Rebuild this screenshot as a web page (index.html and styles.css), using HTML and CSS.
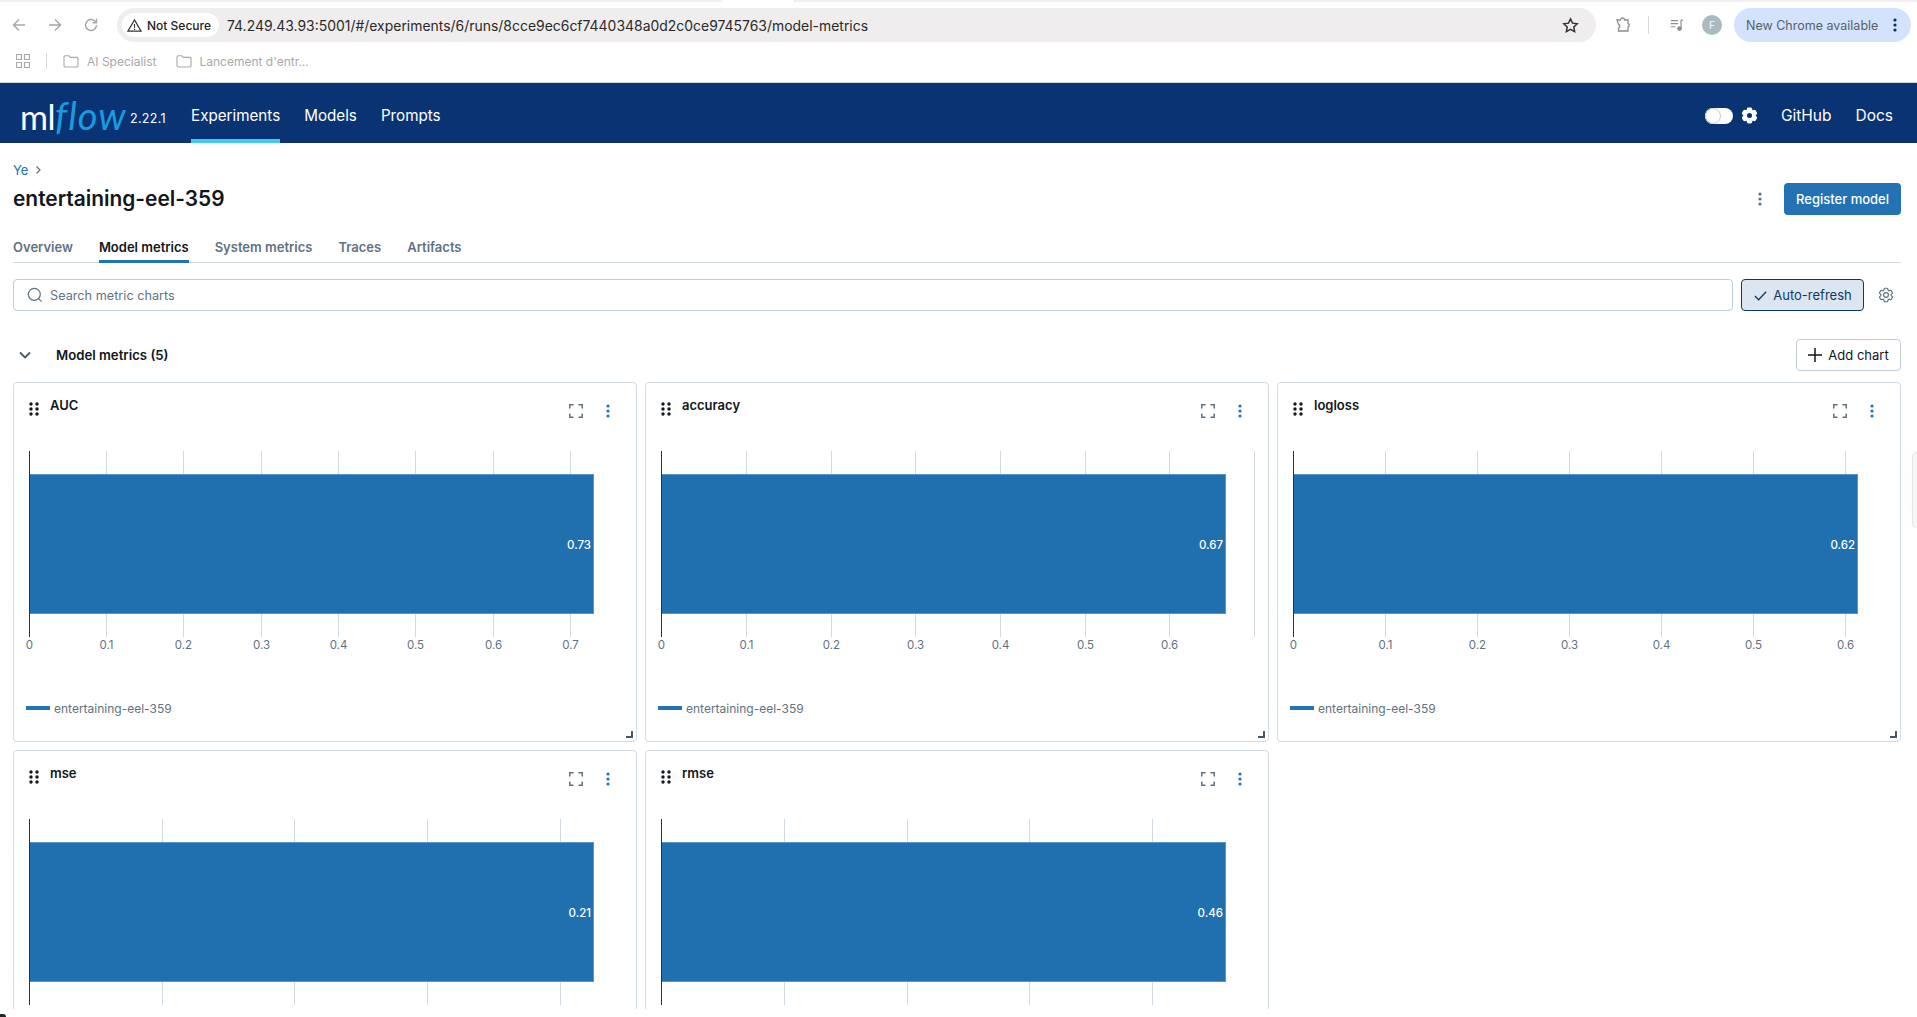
FILE: index.html
```html
<!DOCTYPE html>
<html lang="en">
<head>
  <meta charset="UTF-8" />
  <title>MLflow</title>
  <link rel="stylesheet" href="styles.css">
</head>
<body>

<svg class="sprite" width="0" height="0">
  <symbol id="cog" viewBox="0 0 24 24">
    <path d="M9.594 3.94c.09-.542.56-.94 1.11-.94h2.593c.55 0 1.02.398 1.11.94l.213 1.281c.063.374.313.686.645.87.074.04.147.083.22.127.325.196.72.257 1.075.124l1.217-.456a1.125 1.125 0 0 1 1.37.49l1.296 2.247a1.125 1.125 0 0 1-.26 1.431l-1.003.827c-.293.241-.438.613-.43.992a7.723 7.723 0 0 1 0 .255c-.008.378.137.75.43.991l1.004.827c.424.35.534.955.26 1.43l-1.298 2.247a1.125 1.125 0 0 1-1.369.491l-1.217-.456c-.355-.133-.75-.072-1.076.124a6.47 6.47 0 0 1-.22.128c-.331.183-.581.495-.644.869l-.213 1.281c-.09.543-.56.94-1.11.94h-2.594c-.55 0-1.019-.398-1.11-.94l-.213-1.281c-.062-.374-.312-.686-.644-.87a6.52 6.52 0 0 1-.22-.127c-.325-.196-.72-.257-1.076-.124l-1.217.456a1.125 1.125 0 0 1-1.369-.49l-1.297-2.247a1.125 1.125 0 0 1 .26-1.431l1.004-.827c.292-.24.437-.613.43-.991a6.932 6.932 0 0 1 0-.255c.007-.38-.138-.751-.43-.992l-1.004-.827a1.125 1.125 0 0 1-.26-1.43l1.297-2.247a1.125 1.125 0 0 1 1.37-.491l1.216.456c.356.133.751.072 1.076-.124.072-.044.146-.086.22-.128.332-.183.582-.495.644-.869l.214-1.28Z"/>
  </symbol>
  <symbol id="grip" viewBox="0 0 10 14">
    <circle cx="2" cy="2" r="1.7"/><circle cx="8" cy="2" r="1.7"/>
    <circle cx="2" cy="7" r="1.7"/><circle cx="8" cy="7" r="1.7"/>
    <circle cx="2" cy="12" r="1.7"/><circle cx="8" cy="12" r="1.7"/>
  </symbol>
  <symbol id="expand" viewBox="0 0 14 14">
    <path d="M.75 4.500V.75H4.500M9.500.75h3.750V4.500M13.250 9.500v3.750H9.500M4.500 13.250H.75V9.500" fill="none" stroke="currentColor" stroke-width="1.5"/>
  </symbol>
  <symbol id="kebab" viewBox="0 0 4 14">
    <circle cx="2" cy="2" r="1.6"/><circle cx="2" cy="7" r="1.6"/><circle cx="2" cy="12" r="1.6"/>
  </symbol>
  <symbol id="folder" viewBox="0 0 16 14">
    <path d="M1 3a1.200 1.200 0 0 1 1.200-1.200h3.600L7.400 3.400h6.400A1.200 1.200 0 0 1 15 4.600v7.200a1.200 1.200 0 0 1-1.200 1.200H2.200A1.200 1.200 0 0 1 1 11.800Z" fill="none" stroke="currentColor" stroke-width="1.1"/>
  </symbol>
</svg>

<div class="chrome">
  <div class="tab-strip"><span class="tab-notch"></span></div>
  <div class="toolbar">
    <div class="nav-buttons">
      <svg class="tool-icon" viewBox="0 0 16 16"><path d="M14 8H2.500M8 2.500 2.500 8 8 13.500"/></svg>
      <svg class="tool-icon" viewBox="0 0 16 16"><path d="M2 8h11.500M8 2.500 13.500 8 8 13.500"/></svg>
      <svg class="tool-icon" viewBox="0 0 16 16"><path d="M13.500 8A5.500 5.500 0 1 1 11.800 4L13.500 5.700M13.500 1.800v3.900H9.600"/></svg>
    </div>
    <div class="url-bar">
      <div class="security-chip">
        <svg class="warn-icon" viewBox="0 0 16 16"><path d="M8 2 15 14H1Z"/><path d="M8 6.500v4M8 11.500v1.200"/></svg>
        <span>Not Secure</span>
      </div>
      <div class="url-text">74.249.43.93:5001/#/experiments/6/runs/8cce9ec6cf7440348a0d2c0ce9745763/model-metrics</div>
      <svg class="star-icon" viewBox="0 0 16 16"><path d="m8 1.800 1.900 4 4.400.6-3.200 3 .8 4.400L8 11.700l-3.900 2.100.8-4.400-3.200-3 4.400-.6Z"/></svg>
    </div>
    <svg class="puzzle-icon" viewBox="0 0 18 18"><path d="M3 4h3.500a2 2 0 0 1 4 0H14v3.500a1.800 1.800 0 0 1 0 3.500v4H4.500v-3a1.800 1.800 0 0 0 0-3.500Z"/></svg>
    <span class="tool-sep"></span>
    <svg class="media-icon" viewBox="0 0 18 18"><path d="M2 4h8M2 7.500h8M2 11h5"/><path d="M13.500 3.500h2.500M13.500 3.500V13"/><circle cx="11.800" cy="13" r="2" class="media-note"/></svg>
    <div class="avatar">F</div>
    <div class="update-pill">
      <span>New Chrome available</span>
      <svg class="pill-kebab" viewBox="0 0 4 14"><use href="#kebab"/></svg>
    </div>
  </div>
  <div class="bookmarks">
    <svg class="apps-icon" viewBox="0 0 14 14"><path d="M.5.5h5v5h-5zM8.500.5h5v5h-5zM.5 8.500h5v5h-5zM8.500 8.500h5v5h-5z"/></svg>
    <span class="bookmark-sep"></span>
    <div class="bookmark"><svg class="folder-icon"><use href="#folder"/></svg>AI Specialist</div>
    <div class="bookmark"><svg class="folder-icon"><use href="#folder"/></svg>Lancement d'entr...</div>
  </div>
</div>

<header class="topbar">
  <div class="logo"><span class="logo-ml">ml</span><span class="logo-flow">flow</span></div>
  <span class="version">2.22.1</span>
  <nav class="main-nav">
    <a class="active">Experiments</a>
    <a>Models</a>
    <a>Prompts</a>
  </nav>
  <div class="topbar-right">
    <div class="theme-toggle"><span class="knob"></span></div>
    <svg class="theme-gear" viewBox="0 0 24 24"><use href="#cog"/><circle cx="12" cy="12" r="3.200"/></svg>
    <a class="github-link">GitHub</a>
    <a>Docs</a>
  </div>
</header>

<main class="page">
  <div class="breadcrumb"><a>Ye</a><svg viewBox="0 0 8 10"><path d="m2.500 1.500 3.500 3.500-3.500 3.500"/></svg></div>
  <div class="title-row">
    <h1>entertaining-eel-359</h1>
    <div class="title-actions">
      <svg class="title-kebab" viewBox="0 0 4 14"><use href="#kebab"/></svg>
      <button class="btn-primary">Register model</button>
    </div>
  </div>

  <div class="tabs">
    <a>Overview</a>
    <a class="active">Model metrics</a>
    <a>System metrics</a>
    <a>Traces</a>
    <a>Artifacts</a>
  </div>

  <div class="filter-row">
    <div class="search-box">
      <svg viewBox="0 0 16 16"><circle cx="7.300" cy="7.300" r="6"/><path d="m11.600 11.600 3 3"/></svg>
      <span>Search metric charts</span>
    </div>
    <button class="btn-toggle">
      <svg viewBox="0 0 16 16"><path d="m2 8.500 4 4 8-8.500"/></svg>
      Auto-refresh
    </button>
    <svg class="settings-icon" viewBox="0 0 24 24"><use href="#cog"/><circle cx="12" cy="12" r="3.200"/></svg>
  </div>

  <div class="section-head">
    <svg class="section-chevron" viewBox="0 0 14 10"><path d="m2 2.500 5 5 5-5"/></svg>
    <span>Model metrics (5)</span>
    <button class="btn-outline">
      <svg viewBox="0 0 14 14"><path d="M7 0v14M0 7h14"/></svg>
      Add chart
    </button>
  </div>

  <div class="chart-grid">

    <div class="card">
      <div class="card-head">
        <svg class="grip"><use href="#grip"/></svg>
        <span class="card-title">AUC</span>
        <svg class="expand"><use href="#expand"/></svg>
        <svg class="kebab"><use href="#kebab"/></svg>
      </div>
      <svg class="plot">
        <g class="grid">
          <path d="M92.500 8V194M169.500 8V194M247.500 8V194M324.500 8V194M401.500 8V194M479.500 8V194M556.500 8V194"/>
        </g>
        <rect class="bar" x="15.500" y="31.500" width="564" height="139"/>
        <path class="axis" d="M15.500 8V194"/>
        <text class="bar-value" x="577" y="106">0.73</text>
        <g class="ticks">
          <text x="15.500" y="206">0</text><text x="92.500" y="206">0.1</text><text x="169.500" y="206">0.2</text><text x="247.500" y="206">0.3</text><text x="324.500" y="206">0.4</text><text x="401.500" y="206">0.5</text><text x="479.500" y="206">0.6</text><text x="556.500" y="206">0.7</text>
        </g>
      </svg>
      <div class="legend"><span class="swatch"></span>entertaining-eel-359</div>
      <span class="resize"></span>
    </div>

    <div class="card">
      <div class="card-head">
        <svg class="grip"><use href="#grip"/></svg>
        <span class="card-title">accuracy</span>
        <svg class="expand"><use href="#expand"/></svg>
        <svg class="kebab"><use href="#kebab"/></svg>
      </div>
      <svg class="plot">
        <g class="grid">
          <path d="M100.500 8V194M185.500 8V194M269.500 8V194M354.500 8V194M439.500 8V194M523.500 8V194M608.500 8V194"/>
        </g>
        <rect class="bar" x="15.500" y="31.500" width="564" height="139"/>
        <path class="axis" d="M15.500 8V194"/>
        <text class="bar-value" x="577" y="106">0.67</text>
        <g class="ticks">
          <text x="15.500" y="206">0</text><text x="100.500" y="206">0.1</text><text x="185.500" y="206">0.2</text><text x="269.500" y="206">0.3</text><text x="354.500" y="206">0.4</text><text x="439.500" y="206">0.5</text><text x="523.500" y="206">0.6</text>
        </g>
      </svg>
      <div class="legend"><span class="swatch"></span>entertaining-eel-359</div>
      <span class="resize"></span>
    </div>

    <div class="card">
      <div class="card-head">
        <svg class="grip"><use href="#grip"/></svg>
        <span class="card-title">logloss</span>
        <svg class="expand"><use href="#expand"/></svg>
        <svg class="kebab"><use href="#kebab"/></svg>
      </div>
      <svg class="plot">
        <g class="grid">
          <path d="M107.500 8V194M199.500 8V194M291.500 8V194M383.500 8V194M475.500 8V194M567.500 8V194"/>
        </g>
        <rect class="bar" x="15.500" y="31.500" width="564" height="139"/>
        <path class="axis" d="M15.500 8V194"/>
        <text class="bar-value" x="577" y="106">0.62</text>
        <g class="ticks">
          <text x="15.500" y="206">0</text><text x="107.500" y="206">0.1</text><text x="199.500" y="206">0.2</text><text x="291.500" y="206">0.3</text><text x="383.500" y="206">0.4</text><text x="475.500" y="206">0.5</text><text x="567.500" y="206">0.6</text>
        </g>
      </svg>
      <div class="legend"><span class="swatch"></span>entertaining-eel-359</div>
      <span class="resize"></span>
    </div>

    <div class="card">
      <div class="card-head">
        <svg class="grip"><use href="#grip"/></svg>
        <span class="card-title">mse</span>
        <svg class="expand"><use href="#expand"/></svg>
        <svg class="kebab"><use href="#kebab"/></svg>
      </div>
      <svg class="plot">
        <g class="grid">
          <path d="M148.500 8V194M280.500 8V194M413.500 8V194M546.500 8V194"/>
        </g>
        <rect class="bar" x="15.500" y="31.500" width="564" height="139"/>
        <path class="axis" d="M15.500 8V194"/>
        <text class="bar-value" x="577" y="106">0.21</text>
      </svg>
    </div>

    <div class="card">
      <div class="card-head">
        <svg class="grip"><use href="#grip"/></svg>
        <span class="card-title">rmse</span>
        <svg class="expand"><use href="#expand"/></svg>
        <svg class="kebab"><use href="#kebab"/></svg>
      </div>
      <svg class="plot">
        <g class="grid">
          <path d="M138.500 8V194M261.500 8V194M383.500 8V194M506.500 8V194"/>
        </g>
        <rect class="bar" x="15.500" y="31.500" width="564" height="139"/>
        <path class="axis" d="M15.500 8V194"/>
        <text class="bar-value" x="577" y="106">0.46</text>
      </svg>
    </div>

  </div>
</main>

<div class="side-handle"></div>
<div class="window-corner"></div>

</body>
</html>
```

FILE: styles.css
```css
html, body {
  margin: 0;
  padding: 0;
  height: 1017px;
  overflow: hidden;
  background: #fff;
  font-family: Inter, "Liberation Sans", sans-serif;
  color: #11171c;
}
.sprite {
  position: absolute;
}
svg {
  display: block;
  flex: none;
}
a {
  color: inherit;
  text-decoration: none;
}
button {
  font-family: inherit;
}

/* browser chrome */
.chrome {
  height: 82px;
  border-bottom: 1px solid #d9d9d9;
}
.tab-strip {
  height: 2px;
  background: #f0f0f0;
  position: relative;
}
.tab-notch {
  position: absolute;
  left: 722px;
  width: 71px;
  height: 2px;
  background: #fff;
}
.toolbar {
  height: 34px;
  margin-top: 6px;
  padding: 0 6px 0 0;
  display: flex;
  align-items: center;
}
.nav-buttons {
  width: 117px;
  padding-left: 11px;
  box-sizing: border-box;
  display: flex;
  gap: 20px;
}
.tool-icon {
  width: 16px;
  height: 16px;
  fill: none;
  stroke: #a7a7a7;
  stroke-width: 1.4;
}
.url-bar {
  width: 1479px;
  height: 34px;
  border-radius: 17px;
  background: #efedee;
  display: flex;
  align-items: center;
  padding: 0 17px 0 5px;
  box-sizing: border-box;
}
.security-chip {
  width: 97px;
  height: 24px;
  border-radius: 12px;
  background: #fff;
  display: flex;
  align-items: center;
  gap: 5px;
  padding-left: 5px;
  box-sizing: border-box;
  font-size: 12px;
  font-weight: 500;
  color: #222;
  white-space: nowrap;
}
.warn-icon {
  width: 15px;
  height: 15px;
  fill: none;
  stroke: #333;
  stroke-width: 1.2;
}
.url-text {
  margin-left: 8px;
  flex: 1;
  font-size: 13.95px;
  color: #2a2a2a;
  white-space: nowrap;
}
.star-icon {
  width: 17px;
  height: 17px;
  fill: none;
  stroke: #333;
  stroke-width: 1.4;
}
.puzzle-icon {
  width: 18px;
  height: 18px;
  margin-left: 18px;
  fill: none;
  stroke: #8d8d8d;
  stroke-width: 1.3;
}
.tool-sep {
  width: 1px;
  height: 18px;
  margin-left: 16px;
  background: #d9d9d9;
}
.media-icon {
  width: 16px;
  height: 16px;
  margin-left: 20px;
  fill: none;
  stroke: #8d8d8d;
  stroke-width: 1.3;
}
.media-note {
  fill: #8d8d8d;
}
.avatar {
  width: 20px;
  height: 20px;
  margin-left: 17px;
  border-radius: 50%;
  background: #a9bac1;
  color: #e9eef0;
  font-size: 10px;
  font-weight: 600;
  display: flex;
  align-items: center;
  justify-content: center;
}
.update-pill {
  width: 177px;
  height: 34px;
  margin-left: 12px;
  border-radius: 17px;
  background: #d3e3fd;
  display: flex;
  align-items: center;
  justify-content: space-between;
  padding: 0 14px 0 12px;
  box-sizing: border-box;
  font-size: 12.5px;
  color: #5a5f66;
  white-space: nowrap;
}
.pill-kebab {
  width: 4px;
  height: 14px;
  fill: #0f2a5f;
}
.bookmarks {
  height: 30px;
  margin-top: 4px;
  padding-left: 16px;
  display: flex;
  align-items: center;
  font-size: 12px;
  color: #a9a9a9;
}
.apps-icon {
  width: 14px;
  height: 14px;
  fill: none;
  stroke: #a9a9a9;
  stroke-width: 1.2;
}
.bookmark-sep {
  width: 1px;
  height: 16px;
  margin: 0 16px;
  background: #d9d9d9;
}
.bookmark {
  display: flex;
  align-items: center;
  gap: 8px;
  margin-right: 19px;
  white-space: nowrap;
}
.folder-icon {
  width: 16px;
  height: 14px;
  color: #a9a9a9;
}

/* mlflow top bar */
.topbar {
  height: 60px;
  background: #0a3373;
  color: #fff;
  display: flex;
  align-items: center;
  padding: 0 24px 0 20px;
}
.logo {
  width: 106px;
  margin-top: 4px;
  display: flex;
  align-items: baseline;
  white-space: nowrap;
}
.logo-ml {
  font-family: Lato, sans-serif;
  font-size: 34px;
  font-weight: 400;
  letter-spacing: -0.5px;
}
.logo-flow {
  font-family: Lato, sans-serif;
  font-size: 38px;
  font-style: italic;
  font-weight: 400;
  letter-spacing: 1px;
  color: #1a9be0;
}
.version {
  margin: 11px 0 0 4px;
  width: 61px;
  font-size: 12.5px;
  letter-spacing: 0.3px;
}
.main-nav {
  display: flex;
  gap: 24px;
  height: 60px;
  font-size: 15.2px;
  font-weight: 400;
}
.main-nav a {
  height: 60px;
  line-height: 65px;
  box-sizing: border-box;
}
.main-nav a.active {
  border-bottom: 4px solid #43c9ed;
}
.topbar-right {
  margin-left: auto;
  padding-top: 5px;
  display: flex;
  align-items: center;
  font-size: 15.5px;
  font-weight: 400;
}
.theme-toggle {
  width: 28px;
  height: 16px;
  border-radius: 8px;
  background: #fff;
  position: relative;
}
.knob {
  position: absolute;
  left: 0;
  top: 0;
  width: 16px;
  height: 16px;
  box-sizing: border-box;
  border-radius: 50%;
  background: #fff;
  border: 1px solid #c5ced6;
}
.theme-gear {
  width: 19px;
  height: 19px;
  margin: 0 22px 0 7px;
  fill: #fff;
  stroke: #fff;
  stroke-width: 2;
}
.theme-gear circle {
  fill: #0a3373;
  stroke: none;
}
.github-link {
  margin-right: 24px;
}

/* page */
.page {
  height: 866px;
  overflow: hidden;
  padding: 0 16px 0 13px;
  box-sizing: border-box;
}
.breadcrumb {
  display: flex;
  align-items: center;
  gap: 6px;
  height: 18px;
  margin-top: 18px;
  font-size: 13px;
  color: #2272b4;
}
.breadcrumb svg {
  width: 8px;
  height: 10px;
  fill: none;
  stroke: #5f7281;
  stroke-width: 1.2;
}
.title-row {
  height: 32px;
  margin-top: 4px;
  display: flex;
  align-items: center;
  justify-content: space-between;
}
h1 {
  margin: 0;
  font-size: 20.9px;
  font-weight: 600;
  line-height: 32px;
}
.title-actions {
  display: flex;
  align-items: center;
  gap: 22px;
}
.title-kebab {
  width: 4px;
  height: 14px;
  fill: #5f7281;
}
.btn-primary {
  width: 117px;
  height: 32px;
  border: none;
  border-radius: 4px;
  background: #2272b4;
  color: #fff;
  font-size: 13px;
  font-weight: 500;
}
.tabs {
  margin-top: 16px;
  height: 32px;
  box-sizing: border-box;
  border-bottom: 1px solid #d1d9e1;
  display: flex;
  gap: 26px;
  font-size: 13px;
  font-weight: 600;
  color: #5f7281;
}
.tabs a {
  height: 32px;
  line-height: 32px;
  box-sizing: border-box;
}
.tabs a.active {
  color: #11171c;
  border-bottom: 3px solid #2272b4;
}
.filter-row {
  margin-top: 16px;
  display: flex;
  align-items: center;
}
.search-box {
  width: 1720px;
  height: 32px;
  box-sizing: border-box;
  border: 1px solid #c0cdd8;
  border-radius: 4px;
  display: flex;
  align-items: center;
  gap: 7px;
  padding-left: 13px;
  font-size: 12.7px;
  color: #5f7281;
}
.search-box svg {
  width: 16px;
  height: 16px;
  fill: none;
  stroke: #5f7281;
  stroke-width: 1.2;
}
.btn-toggle {
  width: 123px;
  height: 32px;
  margin-left: 8px;
  border: 1px solid #0e3a5e;
  border-radius: 4px;
  background: #dbe6f1;
  color: #0e3a5e;
  font-size: 13px;
  display: flex;
  align-items: center;
  justify-content: center;
  gap: 5px;
  padding: 0;
}
.btn-toggle svg {
  width: 15px;
  height: 15px;
  fill: none;
  stroke: #0e3a5e;
  stroke-width: 1.4;
}
.settings-icon {
  width: 18px;
  height: 18px;
  margin-left: 13px;
  fill: none;
  stroke: #5f7281;
  stroke-width: 1.6;
}
.section-head {
  margin-top: 28px;
  height: 32px;
  display: flex;
  align-items: center;
  font-size: 13.2px;
  font-weight: 600;
}
.section-chevron {
  width: 14px;
  height: 10px;
  margin: 0 24px 0 5px;
  fill: none;
  stroke: #44596b;
  stroke-width: 1.8;
}
.btn-outline {
  margin-left: auto;
  width: 105px;
  height: 32px;
  background: #fff;
  border: 1px solid #c0cdd8;
  border-radius: 4px;
  color: #11171c;
  font-size: 13px;
  display: flex;
  align-items: center;
  justify-content: center;
  gap: 6px;
  padding: 0;
}
.btn-outline svg {
  width: 14px;
  height: 14px;
  fill: none;
  stroke: #11171c;
  stroke-width: 1.5;
}

/* charts */
.chart-grid {
  margin-top: 11px;
  display: grid;
  grid-template-columns: repeat(3, 1fr);
  grid-auto-rows: 360px;
  gap: 8px;
}
.card {
  position: relative;
  border: 1px solid #d1d9e1;
  border-radius: 4px;
  box-sizing: border-box;
  background: #fff;
}
.card-head {
  height: 60px;
  box-sizing: border-box;
  padding: 14px 26px 0 15px;
  display: flex;
  align-items: flex-start;
}
.grip {
  width: 10px;
  height: 14px;
  margin-top: 5px;
  fill: #11171c;
}
.card-title {
  margin-left: 11px;
  font-size: 13px;
  font-weight: 600;
  line-height: 17px;
}
.expand {
  margin: 7px 0 0 auto;
  width: 14px;
  height: 14px;
  color: #5f7281;
}
.kebab {
  margin: 7px 0 0 23px;
  width: 4px;
  height: 14px;
  fill: #2272b4;
}
.plot {
  width: 622px;
  height: 230px;
}
.grid path {
  stroke: #d1d9e1;
  stroke-width: 1;
  fill: none;
}
.axis {
  stroke: #333;
  stroke-width: 1;
}
.bar {
  fill: #2070b0;
  stroke: #5a95c8;
  stroke-width: 1;
}
.bar-value {
  fill: #fff;
  font-size: 11.5px;
  font-weight: 500;
  text-anchor: end;
}
.ticks text {
  fill: #5f7281;
  font-size: 11.5px;
  text-anchor: middle;
}
.legend {
  margin: 27px 0 0 12px;
  display: flex;
  align-items: center;
  gap: 4px;
  height: 16px;
  font-size: 12px;
  color: #5f7281;
}
.swatch {
  width: 24px;
  height: 4px;
  background: #2272b4;
}
.resize {
  position: absolute;
  right: 3px;
  bottom: 3px;
  width: 7px;
  height: 7px;
  box-sizing: border-box;
  border-right: 2px solid #44596b;
  border-bottom: 2px solid #44596b;
}

/* things lying over the page */
.side-handle {
  position: absolute;
  right: 0;
  top: 452px;
  width: 5px;
  height: 76px;
  box-sizing: border-box;
  border: 1px solid #e4e4e4;
  border-right: none;
  border-radius: 8px 0 0 8px;
  background: #f7f7f7;
  box-shadow: 0 0 24px rgba(0, 0, 0, 0.06);
}
.window-corner {
  position: absolute;
  left: 0;
  top: 1014px;
  width: 6px;
  height: 3px;
  border-radius: 0 3px 0 0;
  background: #1c2a22;
}
```
